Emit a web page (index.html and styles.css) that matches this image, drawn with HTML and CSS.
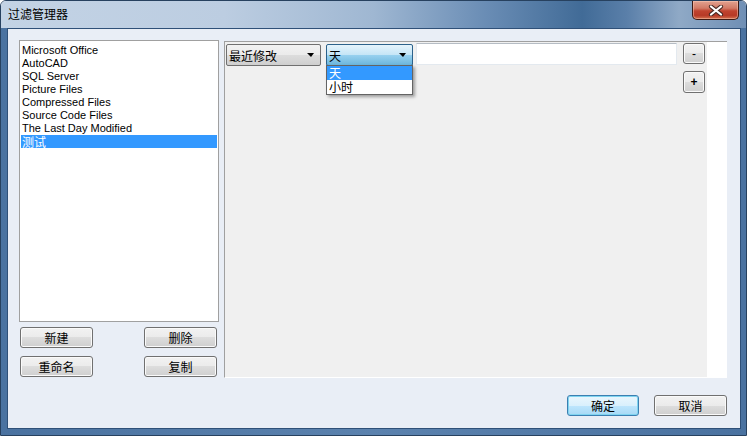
FILE: index.html
```html
<!DOCTYPE html>
<html lang="zh-CN">
<head>
    <meta charset="UTF-8">
    <title>过滤管理器</title>
    <link rel="stylesheet" href="styles.css">
</head>
<body>
    <div class="window">
        <div class="titlebar">
            <span class="title">过滤管理器</span>
            <button class="close" title="关闭">
                <svg width="16" height="11" viewBox="0 0 16 11">
                    <path d="M3 1.5 L13 9.5 M13 1.5 L3 9.5" stroke="#4a2a24" stroke-width="4.2" stroke-linecap="round"/>
                    <path d="M3 1.5 L13 9.5 M13 1.5 L3 9.5" stroke="#ffffff" stroke-width="2.2" stroke-linecap="round"/>
                </svg>
            </button>
        </div>
        <div class="frame">
            <div class="client">
                <div class="main">
                    <div class="left">
                        <ul class="filters">
                            <li>Microsoft Office</li>
                            <li>AutoCAD</li>
                            <li>SQL Server</li>
                            <li>Picture Files</li>
                            <li>Compressed Files</li>
                            <li>Source Code Files</li>
                            <li>The Last Day Modified</li>
                            <li class="selected cjk">测试</li>
                        </ul>
                        <div class="actions">
                            <button class="btn">新建</button>
                            <button class="btn">删除</button>
                            <button class="btn">重命名</button>
                            <button class="btn">复制</button>
                        </div>
                    </div>

                    <!-- rule editor -->
                    <div class="panel">
                        <div class="rules">
                            <div class="rule">
                                <div class="combo field">最近修改<span class="arrow"></span></div>
                                <div class="combo unit open">天<span class="arrow"></span>
                                    <ul class="dropdown">
                                        <li class="selected">天</li>
                                        <li>小时</li>
                                    </ul>
                                </div>
                                <div class="textbox"></div>
                                <button class="btn small minus">-</button>
                            </div>
                            <div class="add-row">
                                <button class="btn small plus">+</button>
                            </div>
                        </div>
                    </div>
                </div>
                <div class="footer">
                    <button class="btn default">确定</button>
                    <button class="btn">取消</button>
                </div>
            </div>
        </div>
    </div>
</body>
</html>
```

FILE: styles.css
```css
body {
    margin: 0;
    background: #ffffff;
    font-family: "Liberation Sans", "Noto Sans CJK SC", sans-serif;
    font-size: 11px;
}
.window {
    width: 747px;
    height: 436px;
    box-sizing: border-box;
    border: 1px solid #27415f;
    border-radius: 6px 6px 0 0;
    display: flex;
    flex-direction: column;
    overflow: hidden;
}
.titlebar {
    height: 27px;
    flex: none;
    display: flex;
    align-items: flex-start;
    padding-left: 7px;
    background: linear-gradient(90deg, #c3d3e5 0%, #bccde1 30%, #9fb7d2 50%, #6a8db5 65%, #416b97 78%, #5a7fa9 84%, #8fa9c6 91%, #6f8fb5 100%);
}
.title {
    font-family: "Noto Sans CJK SC", sans-serif;
    font-size: 12px;
    line-height: 26px;
    color: #000000;
}
.close {
    margin: 0 7px 0 auto;
    width: 47px;
    height: 19px;
    padding: 0;
    border: 1px solid #3d1a14;
    border-top: none;
    border-radius: 0 0 5px 5px;
    background: linear-gradient(#e2a290 0%, #d27a66 40%, #c0432f 55%, #b73a27 80%, #d3714f 100%);
    box-shadow: inset 0 0 0 1px rgba(255, 210, 190, 0.45);
    display: flex;
    align-items: center;
    justify-content: center;
}
.frame {
    flex: 1;
    display: flex;
    padding: 0 5px 6px 6px;
    background: linear-gradient(90deg, #4a72a0, #5b82ae 50%, #4a72a0);
}
.client {
    flex: 1;
    display: flex;
    flex-direction: column;
    border: 1px solid #2f5078;
    background: #e9eef6;
}
.main {
    display: flex;
    align-items: flex-start;
    gap: 5px;
    padding: 11px 13px 0 11px;
}
.left {
    width: 200px;
}
.filters {
    list-style: none;
    margin: 0;
    padding: 3px 0 0;
    height: 277px;
    border: 1px solid #a0a0a0;
    background: #ffffff;
}
.filters li {
    height: 13px;
    line-height: 13px;
    margin: 0 1px;
    padding-left: 1px;
    white-space: nowrap;
}
.filters .cjk {
    font-family: "Noto Sans CJK SC", sans-serif;
    font-size: 12px;
}
.filters .selected {
    background: #3399ff;
    color: #ffffff;
}
.actions {
    display: grid;
    grid-template-columns: 73px 73px;
    justify-content: space-between;
    row-gap: 8px;
    margin-top: 5px;
    padding: 0 2px 0 1px;
}
.btn {
    height: 21px;
    padding: 0;
    border: 1px solid #707070;
    border-radius: 3px;
    background: linear-gradient(#f2f2f2 0%, #ebebeb 50%, #dddddd 50%, #cfcfcf 100%);
    box-shadow: inset 0 0 0 1px #fafafa;
    font-family: "Noto Sans CJK SC", sans-serif;
    font-size: 12px;
    line-height: 18px;
    color: #000000;
}
.btn.default {
    border-color: #3c7fb1;
    background: linear-gradient(#eaf6fd 0%, #d9f0fc 50%, #bee6fd 50%, #a7d9f5 100%);
    box-shadow: inset 0 0 0 1px #7fd4f0;
}
.panel {
    margin-top: 1px;
    width: 502px;
    display: flex;
    border-top: 1px solid #a0a0a0;
    border-left: 1px solid #a0a0a0;
    border-bottom: 1px solid #ffffff;
    background: #ffffff;
}
.rules {
    width: 482px;
    height: 335px;
    padding: 1px 2px 0 1px;
    box-sizing: border-box;
    background: #f0f0f0;
}
.rule {
    display: flex;
    align-items: flex-start;
}
.combo {
    position: relative;
    box-sizing: border-box;
    height: 22px;
    margin-top: 1px;
    display: flex;
    align-items: center;
    justify-content: space-between;
    padding: 0 6px 0 2px;
    border: 1px solid #707070;
    border-radius: 2px;
    background: linear-gradient(#f2f2f2 0%, #ebebeb 50%, #dddddd 50%, #cfcfcf 100%);
    font-family: "Noto Sans CJK SC", sans-serif;
    font-size: 12px;
}
.field {
    width: 95px;
}
.unit {
    width: 87px;
    margin-left: 5px;
}
.combo.open {
    border-color: #2c628b;
    background: linear-gradient(#e5f4fc 0%, #c4e5f6 50%, #98d1ef 50%, #6bb6dd 100%);
}
.arrow {
    width: 0;
    height: 0;
    border-top: 4px solid #000000;
    border-left: 4px solid transparent;
    border-right: 3px solid transparent;
}
.dropdown {
    position: absolute;
    top: 100%;
    left: -1px;
    width: 85px;
    margin: 0;
    padding: 0;
    list-style: none;
    border: 1px solid #646464;
    background: #ffffff;
    box-shadow: 2px 2px 3px rgba(0, 0, 0, 0.35);
}
.dropdown li {
    height: 14px;
    line-height: 14px;
    padding-left: 2px;
}
.dropdown .selected {
    background: #3399ff;
    color: #ffffff;
}
.textbox {
    width: 261px;
    height: 22px;
    margin-left: 3px;
    box-sizing: border-box;
    border: 1px solid #e3e9ef;
    border-top-color: #b5bcc4;
    background: #ffffff;
}
.small {
    width: 22px;
    height: 21px;
    font-family: "Liberation Sans", sans-serif;
    font-weight: bold;
    font-size: 12px;
}
.minus {
    margin-left: 6px;
    font-weight: normal;
}
.add-row {
    display: flex;
    justify-content: flex-end;
    margin-top: 5px;
}
.plus {
    height: 22px;
}
.footer {
    display: flex;
    justify-content: flex-end;
    gap: 15px;
    margin-top: 17px;
    padding-right: 13px;
}
.footer .btn {
    width: 73px;
}
.footer .default {
    width: 72px;
}
```
